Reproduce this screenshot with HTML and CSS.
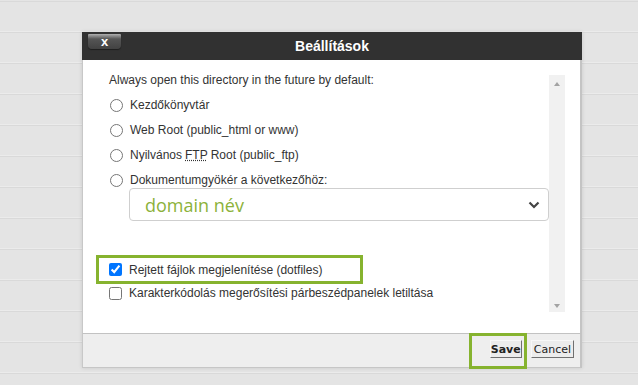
FILE: index.html
```html
<!DOCTYPE html>
<html lang="hu">
  <head>
    <meta charset="UTF-8" />
    <meta name="viewport" content="width=device-width, initial-scale=1.0" />
    <title>Beállítások</title>
    <link rel="stylesheet" href="styles.css">
  </head>
  <body>
    <!-- file list behind the modal -->
    <div class="file-list">
      <div class="file-row"></div>
      <div class="file-row"></div>
      <div class="file-row"></div>
      <div class="file-row"></div>
      <div class="file-row"></div>
      <div class="file-row"></div>
      <div class="file-row"></div>
      <div class="file-row"></div>
      <div class="file-row"></div>
      <div class="file-row"></div>
      <div class="file-row"></div>
      <div class="file-row"></div>
      <div class="file-row"></div>
    </div>

    <div class="dialog">
      <div class="dialog-head">
        <button class="close-btn">x</button>
        <h2>Beállítások</h2>
      </div>

      <div class="dialog-body">
        <div class="options">
          <p class="row">Always open this directory in the future by default:</p>
          <label class="row"><input type="radio" name="dir" /> Kezdőkönyvtár</label>
          <label class="row"><input type="radio" name="dir" /> Web Root (public_html or www)</label>
          <label class="row"><input type="radio" name="dir" /> Nyilvános <abbr title="File Transfer Protocol">FTP</abbr> Root (public_ftp)</label>
          <label class="row"><input type="radio" name="dir" /> Dokumentumgyökér a következőhöz:</label>
          <div class="domain-select">
            <span>domain név</span>
            <svg width="12" height="8" viewBox="0 0 12 8">
              <path d="M1.5 1.5 L6 6 L10.5 1.5" fill="none" stroke="#444" stroke-width="2.2" />
            </svg>
          </div>

          <label class="check-row marked"><input type="checkbox" checked /> Rejtett fájlok megjelenítése (dotfiles)</label>
          <label class="check-row"><input type="checkbox" /> Karakterkódolás megerősítési párbeszédpanelek letiltása</label>
        </div>

        <div class="scrollbar">
          <span class="arrow up"></span>
          <span class="arrow down"></span>
        </div>
      </div>

      <div class="dialog-foot">
        <div class="save-mark">
          <button class="btn btn-save">Save</button>
        </div>
        <button class="btn">Cancel</button>
      </div>
    </div>
  </body>
</html>
```

FILE: styles.css
```css
body {
  margin: 0;
  padding: 0;
  font-family: "Liberation Sans", Arial, sans-serif;
  background: #e4e4e4;
  height: 100vh;
  overflow: hidden;
}
.file-list {
  padding-top: 1px;
}
.file-row {
  height: 29px;
  border-top: 1px solid #d9d9d9;
  border-bottom: 1px solid #ebebeb;
}
.dialog {
  position: absolute;
  left: 82px;
  top: 32px;
  width: 500px;
  box-shadow: 0 0 4px rgba(0, 0, 0, 0.12);
}
.dialog-head {
  position: relative;
  height: 28px;
  background: #313131;
  display: flex;
  align-items: center;
  justify-content: center;
}
.dialog-head h2 {
  margin: 0;
  color: #fff;
  font-size: 14px;
  font-weight: bold;
}
.close-btn {
  position: absolute;
  left: 6px;
  top: 2px;
  width: 33px;
  height: 15px;
  padding: 0;
  border: none;
  border-radius: 1px 1px 4px 4px;
  background: linear-gradient(#b0b0b0 0, #8a8a8a 2px, #555 5px, #424242 100%);
  box-shadow: 0 1px 1px #1e1e1e;
  color: #fff;
  font-family: "Liberation Sans", Arial, sans-serif;
  font-weight: bold;
  font-size: 13px;
  line-height: 13px;
}
.dialog-body {
  display: flex;
  height: 273px;
  background: #fff;
  border-left: 1px solid #c8c8c8;
  border-right: 2px solid #c4c4c4;
}
.options {
  flex: 1;
  padding: 13px 0 0 26px;
  display: flex;
  flex-direction: column;
  font-size: 12px;
  color: #333;
}
.row {
  margin: 0 0 11px 0;
  height: 14px;
  display: flex;
  align-items: center;
  white-space: nowrap;
}
.row input {
  margin: 0 7px 0 1px;
  width: 13px;
  height: 13px;
}
abbr {
  text-decoration: underline dotted;
  margin: 0 3px;
}
.row:nth-child(5) {
  margin-bottom: 1px;
}
.domain-select {
  margin-left: 20px;
  height: 31px;
  border: 1px solid #cfcfcf;
  border-radius: 4px;
  display: flex;
  align-items: center;
  justify-content: space-between;
  padding: 0 8px 0 15px;
  color: #8cb23a;
  font-family: "Open Sans", "Liberation Sans", sans-serif;
  font-size: 18px;
}
.check-row {
  display: flex;
  align-items: center;
  height: 18px;
  white-space: nowrap;
}
.check-row input {
  margin: 0 7px 0 0;
  width: 13px;
  height: 13px;
}
.marked {
  margin: 34px 0 0 -13px;
  width: 251px;
  height: 23px;
  padding-left: 10px;
  border: 3px solid #86b32f;
  box-sizing: content-box;
}
.marked input {
  margin-left: 0;
}
.scrollbar {
  position: relative;
  width: 16px;
  margin: 15px 15px 21px 0;
  background: #f1f1f1;
}
.arrow {
  position: absolute;
  left: 5px;
  width: 0;
  height: 0;
  border-left: 3px solid transparent;
  border-right: 3px solid transparent;
}
.arrow.up {
  top: 7px;
  border-bottom: 4px solid #a3a3a3;
}
.arrow.down {
  bottom: 4px;
  border-top: 4px solid #a3a3a3;
}
.dialog-foot {
  height: 33px;
  background: #eeeeee;
  border-top: 1px solid #c2c2c2;
  border-bottom: 1px solid #c6c6c6;
  border-left: 1px solid #c8c8c8;
  border-right: 2px solid #c4c4c4;
  display: flex;
  justify-content: flex-end;
  align-items: flex-start;
  padding-right: 6px;
}
.save-mark {
  margin-top: -1px;
  width: 50px;
  height: 26px;
  border: 3px solid #86b32f;
  display: flex;
  justify-content: flex-end;
  align-items: flex-start;
  padding: 4px 2px 0 0;
  box-sizing: content-box;
}
.btn {
  height: 18px;
  padding: 0 2px;
  font-family: "DejaVu Sans", Verdana, sans-serif;
  font-size: 11px;
  color: #222;
  background: #ececec;
  border: 1px solid;
  border-color: #f8f8f8 #707070 #707070 #f8f8f8;
  margin-top: 6px;
  margin-left: 4px;
}
.btn-save {
  margin: 0;
  padding: 0;
  font-weight: bold;
}
```
